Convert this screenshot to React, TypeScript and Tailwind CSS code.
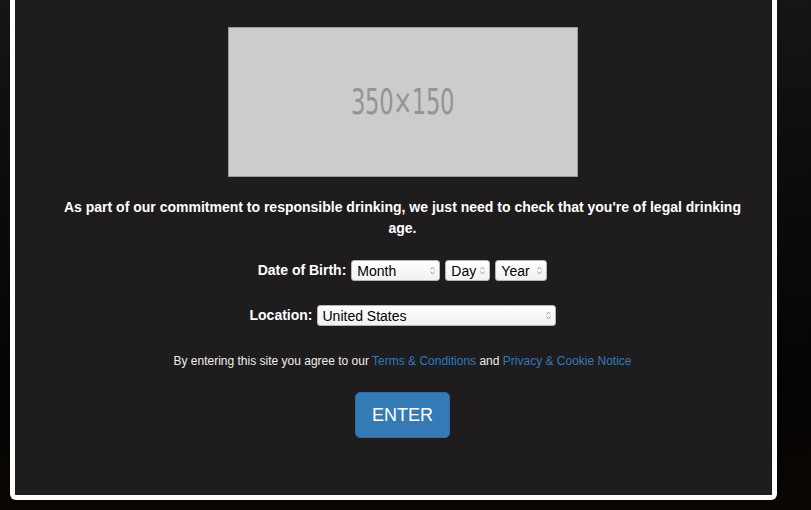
import React from 'react';

const FONT = { fontFamily: '"Liberation Sans", Arial, Helvetica, sans-serif' };

function Arrows() {
  return (
    <svg width="5" height="9" viewBox="0 0 5 9" className="shrink-0">
      <path d="M0.5 3.5 L2.5 1 L4.5 3.5" fill="none" stroke="#a0a0a0" strokeWidth="1" />
      <path d="M0.5 5.5 L2.5 8 L4.5 5.5" fill="none" stroke="#a0a0a0" strokeWidth="1" />
    </svg>
  );
}

function FakeSelect({ value, width }: { value: string; width: string }) {
  return (
    <div
      className={`${width} h-[21px] flex items-center justify-between pl-[5px] pr-[4px] rounded-[3px] border border-[#b5b5b5] bg-[linear-gradient(180deg,#ffffff_0%,#f1f1f1_100%)] text-[14px] leading-none text-black`}
    >
      <span>{value}</span>
      <Arrows />
    </div>
  );
}

export default function App() {
  return (
    <div
      className="w-[811px] h-[510px] overflow-hidden bg-[linear-gradient(180deg,#151515_0%,#0c0c0c_35%,#050403_75%,#0a0603_100%)] pl-[10px] pr-[34px]"
      style={FONT}
    >
      <div className="w-[767px] h-[500px] border-x-[5px] border-b-[5px] border-white rounded-b-[6px] bg-[#1f1c1d] flex flex-col items-center pt-[27px] pl-[44px] pr-[26px]">
        <div className="w-[350px] h-[150px] shrink-0 bg-[#cccccc] border border-[#9a9a9a] flex items-center justify-center">
          <span
            className="text-[35px] leading-none text-[#949494] scale-x-[0.72] tracking-[-0.5px]"
            style={{ fontFamily: '"DejaVu Sans Condensed", "DejaVu Sans", sans-serif' }}
          >
            350×150
          </span>
        </div>

        <p className="mt-[20px] text-center text-white font-bold text-[14px] leading-[21px]">
          As part of our commitment to responsible drinking, we just need to check that you're of legal drinking age.
        </p>

        <div className="mt-[21px] flex items-center">
          <span className="text-white font-bold text-[14px] mr-[5px]">Date of Birth:</span>
          <FakeSelect value="Month" width="w-[89px]" />
          <div className="w-[5px]" />
          <FakeSelect value="Day" width="w-[45px]" />
          <div className="w-[5px]" />
          <FakeSelect value="Year" width="w-[52px]" />
        </div>

        <div className="mt-[24px] flex items-center">
          <span className="text-white font-bold text-[14px] mr-[4px]">Location:</span>
          <FakeSelect value="United States" width="w-[239px]" />
        </div>

        <p className="mt-[27px] text-[12px] leading-[17px] text-[#eeeeee]">
          By entering this site you agree to our{' '}
          <a className="text-[#337ab7]">Terms &amp; Conditions</a> and{' '}
          <a className="text-[#337ab7]">Privacy &amp; Cookie Notice</a>
        </p>

        <button className="mt-[22px] h-[46px] px-[16px] rounded-[5px] bg-[#337ab7] border border-[#2e6da4] text-white text-[18px] leading-none">
          ENTER
        </button>
      </div>
    </div>
  );
}
